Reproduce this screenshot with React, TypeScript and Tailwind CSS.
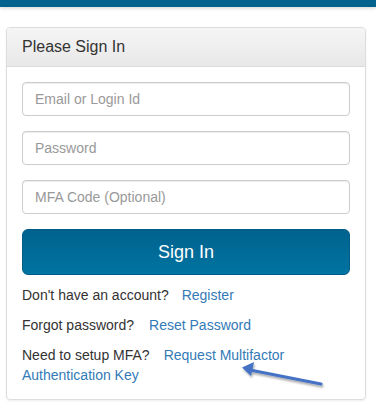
import React from "react";

const SignIn: React.FC = () => {
  return (
    <div
      className="relative w-[376px] h-[413px] bg-white overflow-hidden text-[14px] text-[#333]"
      style={{ fontFamily: '"Liberation Sans", Arial, sans-serif' }}
    >
      <div className="h-[7px] bg-[#00628d] shadow-[0_2px_3px_rgba(0,0,0,0.12)]" />
      <div className="ml-[6px] mt-[20px] w-[360px] border border-[#ddd] rounded-[4px] shadow-[0_1px_2px_rgba(0,0,0,0.08)]">
        <div className="h-[39px] px-[15px] flex items-center border-b border-[#ddd] rounded-t-[3px] bg-gradient-to-b from-[#f5f5f5] to-[#e8e8e8] text-[16px] text-[#333]">
          Please Sign In
        </div>
        <div className="px-[15px] pt-[15px] pb-[14px]">
          <form className="flex flex-col gap-[15px]" onSubmit={(e) => e.preventDefault()}>
            <input
              type="text"
              placeholder="Email or Login Id"
              className="h-[34px] px-[12px] border border-[#ccc] rounded-[4px] shadow-[inset_0_1px_1px_rgba(0,0,0,0.075)] placeholder:text-[#999] outline-none"
            />
            <input
              type="password"
              placeholder="Password"
              className="h-[34px] px-[12px] border border-[#ccc] rounded-[4px] shadow-[inset_0_1px_1px_rgba(0,0,0,0.075)] placeholder:text-[#999] outline-none"
            />
            <input
              type="text"
              placeholder="MFA Code (Optional)"
              className="h-[34px] px-[12px] border border-[#ccc] rounded-[4px] shadow-[inset_0_1px_1px_rgba(0,0,0,0.075)] placeholder:text-[#999] outline-none"
            />
            <button
              type="submit"
              className="h-[46px] text-[18px] text-white rounded-[6px] border border-[#005c85] bg-gradient-to-b from-[#00628e] to-[#0074a2]"
            >
              Sign In
            </button>
          </form>
          <div className="mt-[10px] leading-[20px]">
            Don't have an account?
            <a href="#" className="ml-[13px] text-[#337ab7]">
              Register
            </a>
          </div>
          <div className="mt-[10px] leading-[20px]">
            Forgot password?
            <a href="#" className="ml-[15px] text-[#337ab7]">
              Reset Password
            </a>
          </div>
          <div className="mt-[10px] leading-[20px]">
            Need to setup MFA?
            <a href="#" className="ml-[14px] text-[#337ab7]">
              Request Multifactor Authentication Key
            </a>
          </div>
        </div>
      </div>
      <svg
        className="absolute left-0 top-0 pointer-events-none"
        width="376"
        height="413"
        viewBox="0 0 376 413"
      >
        <defs>
          <filter id="sh" x="-20%" y="-50%" width="140%" height="200%">
            <feDropShadow dx="1" dy="2" stdDeviation="1" floodColor="#000" floodOpacity="0.35" />
          </filter>
        </defs>
        <g filter="url(#sh)">
          <line x1="321" y1="384" x2="250" y2="370" stroke="#4472c4" strokeWidth="3.2" strokeLinecap="round" />
          <polygon points="242,367.5 254,362 251,376" fill="#4472c4" />
        </g>
      </svg>
    </div>
  );
};

export default function App() {
  return <SignIn />;
}
